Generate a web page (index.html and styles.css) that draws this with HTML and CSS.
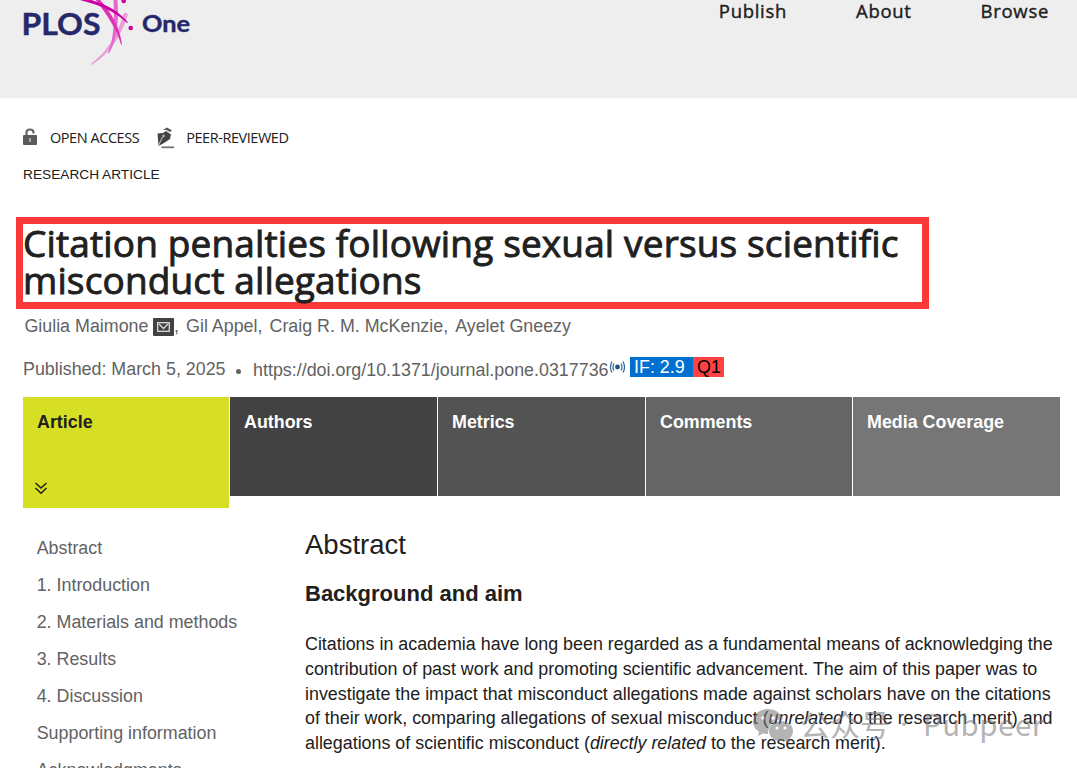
FILE: index.html
```
<!DOCTYPE html>
<html lang="en">
<head>
    <meta charset="UTF-8">
    <meta name="viewport" content="width=device-width, initial-scale=1.0">
    <title>Citation penalties following sexual versus scientific misconduct allegations | PLOS One</title>
    <link rel="stylesheet" href="styles.css">
</head>
<body>
    <header class="topbar">
        <svg class="logo" width="200" height="70" viewBox="0 0 200 70">
            <path d="M123.500 14C125 12 128.500 12.500 127.500 16C121 35 112 52 91.500 65L91 64C109 50 118 33 123.500 14Z" fill="#ea9edb"/>
            <path d="M113.500 -1H117.500C119 22 117 40 109 53.500L108 53C114 38 114.500 20 113.500 -1Z" fill="#e568cb"/>
            <path d="M95 -1H99.500C111 12 120 27 122 44.500H121C117 30 108 16 95 -1Z" fill="#dc35b9"/>
            <path d="M80 -1H88C106 4 119 11 128 22.500L127 23C115 12 103 6 80 0Z" fill="#cc00a0"/>
            <circle cx="123.700" cy="1" r="2.300" fill="#cc00a0"/>
            <circle cx="130.700" cy="28" r="2.300" fill="#cc00a0"/>
            <text class="logo-plos" x="21.500" y="34.500" textLength="79" lengthAdjust="spacingAndGlyphs">PLOS</text>
            <text class="logo-one" x="142" y="32" textLength="48" lengthAdjust="spacingAndGlyphs">One</text>
        </svg>
        <nav class="nav">
            <a>Publish</a>
            <a>About</a>
            <a>Browse</a>
        </nav>
    </header>

    <main class="page">
        <div class="flags">
            <svg class="lock" width="15" height="18" viewBox="0 0 15 18">
                <path d="M3.500 7V4.500Q3.500 1.500 7 1.500T10.500 4.500V5.500" fill="none" stroke="#666" stroke-width="2.200"/>
                <rect x="0" y="7" width="14" height="10" rx="1" fill="#5a5a5a"/>
                <rect x="6" y="10" width="2" height="4" fill="#aaa"/>
            </svg>
            <span class="open">OPEN ACCESS</span>
            <svg class="pen" width="18" height="22" viewBox="0 0 18 22">
                <path d="M6 3L10 0.500L15 3.500L13 5L9.500 3Z" fill="#555"/>
                <path d="M0.500 6.500L6 6L9 4L14 7.500L13 12L7 16L1.500 19Z" fill="#444"/>
                <path d="M1.500 18.500L5.500 10" stroke="#ccc" stroke-width="1"/>
                <circle cx="6.500" cy="9" r="1.400" fill="#aaa"/>
                <path d="M4.500 20.300H17" stroke="#777" stroke-width="1.800"/>
            </svg>
            <span class="peer">PEER-REVIEWED</span>
        </div>
        <p class="type">RESEARCH ARTICLE</p>

        <h1 class="title">Citation penalties following sexual versus scientific<br>misconduct allegations</h1>

        <div class="authors">
            <span>Giulia Maimone</span>
            <svg class="mail" width="21" height="18" viewBox="0 0 21 18">
                <rect width="21" height="18" rx="1" fill="#424242"/>
                <rect x="4.700" y="4.700" width="11.600" height="8.600" fill="none" stroke="#ddd" stroke-width="1.300"/>
                <path d="M6 6L10.500 10.500L15 6" fill="none" stroke="#ddd" stroke-width="1.300"/>
            </svg>
            <span class="author">,</span>
            <span class="author">Gil Appel,</span>
            <span class="author">Craig R. M. McKenzie,</span>
            <span class="author">Ayelet Gneezy</span>
        </div>

        <div class="pubinfo">
            <span class="date">Published: March 5, 2025</span>
            <i class="dot"></i>
            <span class="doi">https://doi.org/10.1371/journal.pone.0317736</span>
            <svg class="signal" width="15" height="14" viewBox="0 0 15 14">
                <circle cx="7.500" cy="7" r="2.400" fill="#1d5288"/>
                <path d="M4 3.500Q2 7 4 10.500M11 3.500Q13 7 11 10.500M2 1.500Q-1 7 2 12.500M13 1.500Q16 7 13 12.500" fill="none" stroke="#2f659c" stroke-width="1.200"/>
            </svg>
            <span class="factor">IF: 2.9</span><span class="quartile">Q1</span>
        </div>

        <div class="tabs">
            <div class="tab active">Article
                <svg width="14" height="13" viewBox="0 0 14 13">
                    <path d="M1.500 1L7 6L12.500 1M1.500 6L7 11.300L12.500 6" fill="none" stroke="#202020" stroke-width="1.500"/>
                </svg>
            </div>
            <div class="tab authors-tab">Authors</div>
            <div class="tab metrics-tab">Metrics</div>
            <div class="tab comments-tab">Comments</div>
            <div class="tab media-tab">Media Coverage</div>
        </div>

        <div class="content">
            <ul class="toc">
                <li>Abstract</li>
                <li>1. Introduction</li>
                <li>2. Materials and methods</li>
                <li>3. Results</li>
                <li>4. Discussion</li>
                <li>Supporting information</li>
                <li>Acknowledgments</li>
            </ul>
            <section class="abstract">
                <h2>Abstract</h2>
                <h3>Background and aim</h3>
                <p>
                    Citations in academia have long been regarded as a fundamental means of acknowledging the<br>
                    contribution of past work and promoting scientific advancement. The aim of this paper was to<br>
                    investigate the impact that misconduct allegations made against scholars have on the citations<br>
                    of their work, comparing allegations of sexual misconduct (<em>unrelated</em> to the research merit) and<br>
                    allegations of scientific misconduct (<em>directly related</em> to the research merit).
                </p>
            </section>
        </div>
    </main>

    <div class="watermark">
        <svg width="42" height="34" viewBox="0 0 42 34">
            <path d="M15 0C6 0 0 6 0 12.500C0 17 2.500 20.500 6 22.500L5 27L10 24.500L15 25C15 15 22 10 30 10C28 4 22 0 15 0Z"/>
            <path d="M28 12C21 12 16 16.500 16 22C16 28 21 32 28 32L32 31.500L37 34L36 30C38.500 28 40 25.500 40 22C40 16.500 35 12 28 12Z"/>
            <g fill="#fff">
                <circle cx="10" cy="9" r="1.800"/>
                <circle cx="20" cy="9" r="1.800"/>
                <circle cx="24" cy="19" r="1.500"/>
                <circle cx="32" cy="19" r="1.500"/>
            </g>
        </svg>
        <span class="wm-cn">公众号</span>
        <span class="wm-sep">·</span>
        <span class="wm-name">Pubpeer</span>
    </div>
</body>
</html>
```
FILE: styles.css
```
* {
    box-sizing: border-box;
}
body {
    margin: 0;
    height: 768px;
    overflow: hidden;
    position: relative;
    background: #fff;
    color: #202020;
    font-family: "Liberation Sans", Arial, sans-serif;
    font-size: 17.86px;
}
h1, h2, h3, p, ul {
    margin: 0;
    padding: 0;
}
.topbar {
    height: 98px;
    background: #eee;
    display: flex;
    justify-content: space-between;
}
.logo-plos, .logo-one {
    font-family: Lato, sans-serif;
    font-weight: 700;
    fill: #25286a;
    stroke: #25286a;
    stroke-width: 0.4px;
}
.logo-plos {
    font-size: 30px;
}
.logo-one {
    font-size: 23px;
}
.nav {
    display: flex;
    gap: 69px;
    padding-right: 28px;
    font-family: "Open Sans", sans-serif;
    font-size: 18.5px;
    letter-spacing: 0.7px;
    line-height: 22px;
    -webkit-text-stroke: 0.4px #202020;
}
.page {
    padding: 28px 17px 0 23px;
}
.flags {
    display: flex;
    align-items: center;
    height: 24px;
    font-family: "Open Sans", sans-serif;
    font-size: 14.5px;
    letter-spacing: -0.45px;
}
.lock {
    margin-top: -3px;
}
.open {
    margin: -2px 18px 0 12px;
}
.pen {
    margin-right: 11px;
}
.peer {
    margin-top: -2px;
}
.type {
    margin-top: 15px;
    font-size: 13.7px;
    line-height: 20px;
}
.title {
    width: 913px;
    height: 92px;
    margin: 32px 0 0 -7px;
    border: 7px solid #fb3838;
    font-family: "Open Sans", sans-serif;
    font-size: 37px;
    font-weight: normal;
    letter-spacing: 0.14px;
    line-height: 37px;
    white-space: nowrap;
    -webkit-text-stroke: 0.9px #202020;
}
.authors {
    display: flex;
    align-items: center;
    height: 24px;
    margin: 5px 0 0 1.4px;
    color: #626262;
}
.mail {
    margin-left: 4.6px;
    margin-top: 2px;
}
.author + .author {
    margin-left: 7px;
}
.pubinfo {
    display: flex;
    align-items: center;
    height: 24px;
    margin-top: 19px;
    color: #626262;
}
.dot {
    width: 5px;
    height: 5px;
    margin: 5px 12px 0 10.5px;
    border-radius: 50%;
    background: #626262;
}
.doi {
    margin-top: 2px;
}
.signal {
    margin: -4px 5px 0 1.5px;
}
.factor, .quartile {
    height: 20px;
    margin-top: -4px;
    line-height: 20px;
    padding-left: 4px;
}
.factor {
    width: 63px;
    background: #0070d0;
    color: #fff;
}
.quartile {
    width: 31px;
    background: #ff4242;
    color: #000;
}
.tabs {
    display: grid;
    grid-template-columns: 206px 207px 207px 206px 207px;
    gap: 1px;
    align-items: start;
    margin-top: 16px;
}
.tab {
    height: 99px;
    padding: 15px 14px;
    line-height: 20px;
    font-weight: bold;
    color: #fff;
}
.active {
    display: flex;
    flex-direction: column;
    justify-content: space-between;
    height: 111px;
    padding-bottom: 13px;
    background: #d6df23;
    color: #202020;
}
.active svg {
    margin-left: -3px;
}
.authors-tab {
    background: #424242;
}
.metrics-tab {
    background: #535353;
}
.comments-tab {
    background: #656565;
}
.media-tab {
    background: #767676;
}
.content {
    display: grid;
    grid-template-columns: 282px 1fr;
}
.toc {
    list-style: none;
    padding: 21.6px 0 0 13.7px;
    line-height: 37.1px;
    color: #626262;
}
.abstract {
    padding-top: 20px;
    white-space: nowrap;
}
.abstract h2 {
    font-size: 27.5px;
    font-weight: normal;
    line-height: 34px;
}
.abstract h3 {
    margin-top: 18px;
    font-size: 22px;
    line-height: 28px;
}
.abstract p {
    margin-top: 24px;
    line-height: 24.8px;
}
.watermark {
    position: absolute;
    left: 753px;
    top: 708px;
    display: flex;
    align-items: center;
    height: 36px;
    color: #777;
    fill: #777;
    opacity: 0.55;
    font-family: "Noto Sans CJK SC", sans-serif;
    font-size: 30px;
    line-height: 30px;
}
.wm-cn {
    margin: -7px 0 0 5px;
}
.wm-sep {
    width: 10px;
    margin: -7px 13px 0 10px;
    font-family: "Open Sans", sans-serif;
}
.wm-name {
    margin-top: -7px;
    font-size: 29.5px;
    letter-spacing: 0.5px;
}
```
